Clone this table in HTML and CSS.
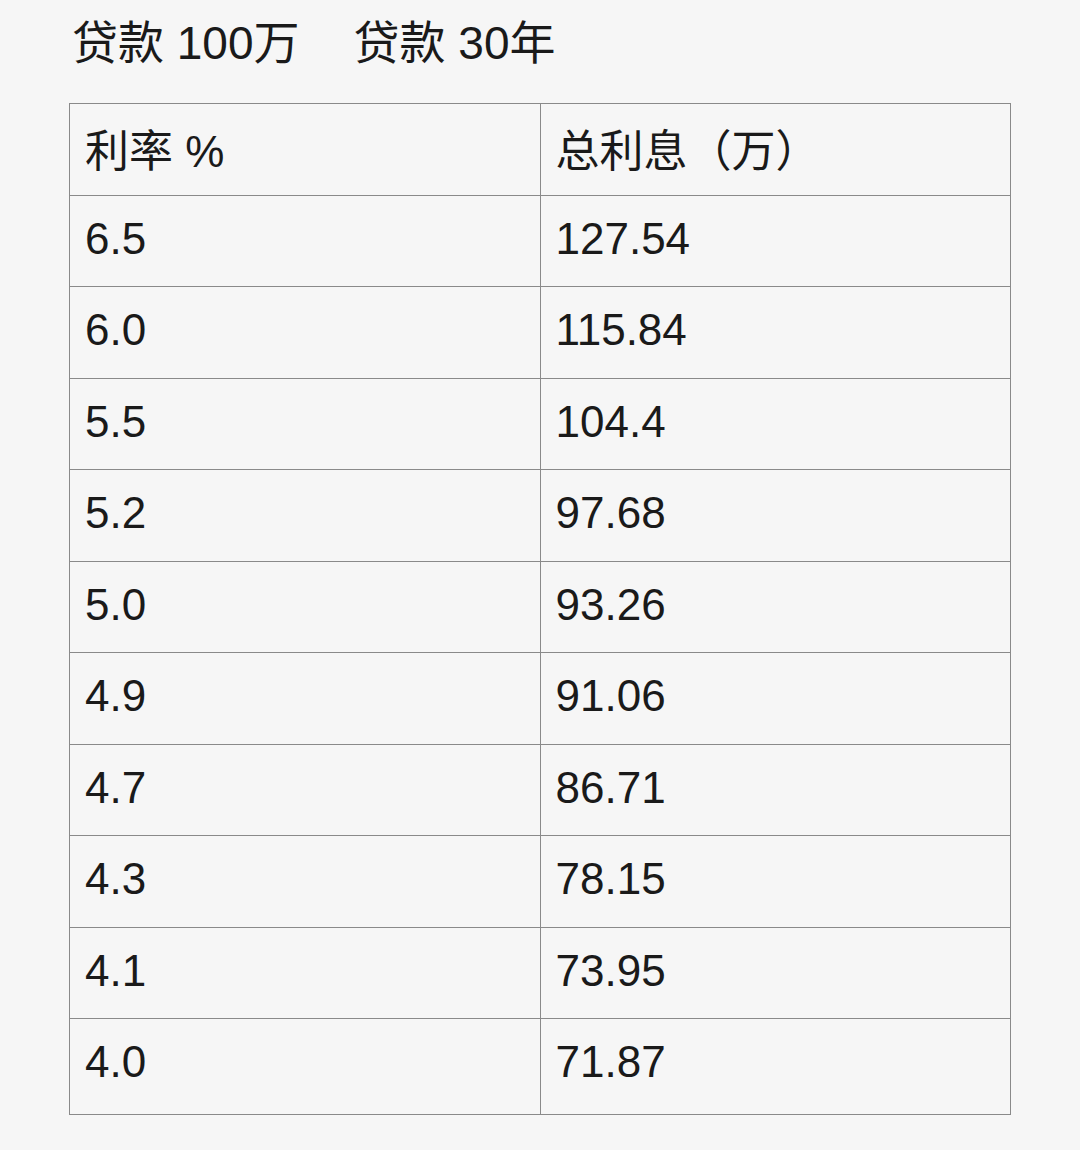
FILE: index.html
```html
<!DOCTYPE html>
<html lang="zh-CN">
<head>
<meta charset="utf-8">
<title>贷款利息表</title>
<link rel="stylesheet" href="styles.css">
</head>
<body>
<div class="page">
  <div class="title">
    <span class="part">贷款 100万</span>
    <span class="part">贷款 30年</span>
  </div>
  <table class="rates">
    <tr class="head"><td>利率 %</td><td>总利息（万）</td></tr>
    <tr><td>6.5</td><td>127.54</td></tr>
    <tr><td>6.0</td><td>115.84</td></tr>
    <tr><td>5.5</td><td>104.4</td></tr>
    <tr><td>5.2</td><td>97.68</td></tr>
    <tr><td>5.0</td><td>93.26</td></tr>
    <tr><td>4.9</td><td>91.06</td></tr>
    <tr><td>4.7</td><td>86.71</td></tr>
    <tr><td>4.3</td><td>78.15</td></tr>
    <tr><td>4.1</td><td>73.95</td></tr>
    <tr class="last"><td>4.0</td><td>71.87</td></tr>
  </table>
</div>
</body>
</html>
```
FILE: styles.css
```css
html, body {
  margin: 0;
  padding: 0;
  background: #f6f6f6;
}
.page {
  width: 1080px;
  height: 1150px;
  padding: 18px 0 0 69px;
  box-sizing: border-box;
  font-family: "Liberation Sans", "Noto Sans CJK SC", sans-serif;
  color: #1a1a1a;
}
.title {
  display: flex;
  gap: 54px;
  padding-left: 3px;
  font-size: 46px;
  line-height: 50px;
  height: 50px;
}
.rates {
  margin-top: 35px;
  border-collapse: collapse;
  width: 942px;
  table-layout: fixed;
  font-size: 44px;
}
.rates td {
  border: 1px solid #8a8a8a;
  height: 91.5px;
  padding: 0 0 4px 15px;
  vertical-align: middle;
  box-sizing: border-box;
}
.rates tr.head td {
  padding-bottom: 2px;
}
.rates tr.last td {
  height: 96px;
  padding-bottom: 10px;
}
```
